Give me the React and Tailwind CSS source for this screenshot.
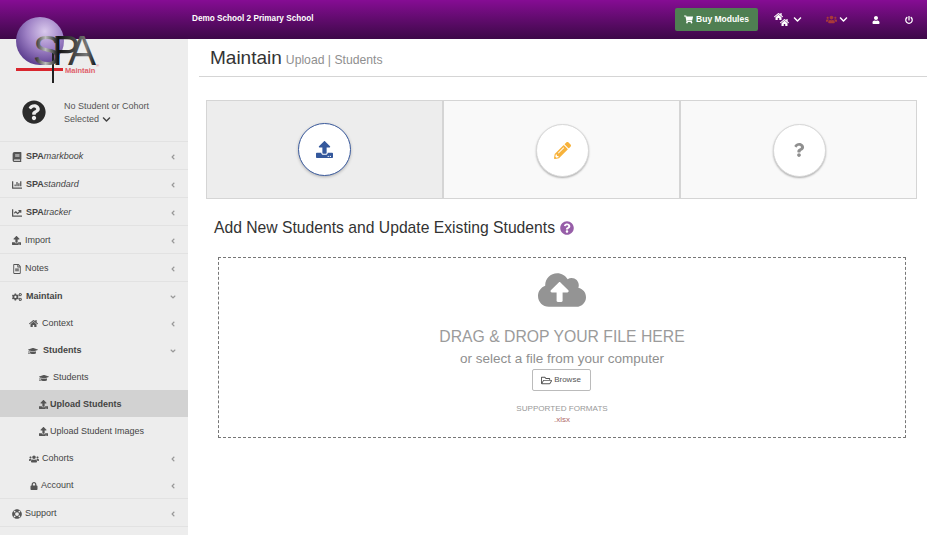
import {
  FaAngleDown, FaAngleLeft, FaBook, FaChartBar, FaChartLine, FaChevronDown, FaCloudUploadAlt,
  FaCogs, FaGraduationCap, FaHome, FaLifeRing, FaLock, FaPencilAlt, FaPowerOff, FaQuestion,
  FaQuestionCircle, FaRegFileAlt, FaRegFolderOpen, FaShoppingCart, FaUpload, FaUser, FaUsers,
} from "react-icons/fa";

const Logo = () => (
  <svg className="absolute left-[14px] top-[15px] z-10" width="92" height="72" viewBox="0 0 92 72">
    <defs>
      <radialGradient id="sphere" cx="0.6" cy="0.3" r="0.75">
        <stop offset="0" stopColor="#d9c9ec" />
        <stop offset="0.5" stopColor="#9f82c6" />
        <stop offset="1" stopColor="#56388a" />
      </radialGradient>
      <linearGradient id="letters" x1="0" y1="0" x2="1" y2="0">
        <stop offset="0" stopColor="#111" />
        <stop offset="0.2" stopColor="#bbb" />
        <stop offset="0.4" stopColor="#111" />
        <stop offset="0.65" stopColor="#444" />
        <stop offset="0.85" stopColor="#777" />
        <stop offset="1" stopColor="#111" />
      </linearGradient>
    </defs>
    <circle cx="26" cy="26" r="24" fill="url(#sphere)" />
    <rect x="2" y="53" width="47" height="3" fill="#d9262e" />
    <rect x="38" y="38" width="2" height="30" fill="#222" />
    <text x="19" y="50" fontFamily="Liberation Sans" fontSize="42" letterSpacing="-9" fill="url(#letters)">SPA</text>
    <text x="51" y="58" fontFamily="Liberation Sans" fontSize="7.5" fontWeight="700" fill="#e0606a">Maintain</text>
    <text x="82" y="52" fontFamily="Liberation Sans" fontSize="4" fill="#e0606a">®</text>
  </svg>
);

const Row = ({ icon: Icon, children, open, active, bold, indent = "pl-3", top, gap = "mr-[3px]", size = "text-[10px]" }) => (
  <div className={`${top ? "h-[28px] border-b" : "h-[27px]"} ${active ? "bg-[#d2d2d2]" : ""} ${indent} border-[#e2e2e2] flex items-center pr-[11px] pt-[2px] text-[9px] text-[#444] ${bold ? "font-bold" : ""}`}>
    <Icon className={`${size} text-[#555] shrink-0 ${gap}`} />
    <span className="flex-1 whitespace-nowrap">{children}</span>
    {open === undefined ? null : open ? (
      <FaAngleDown className="text-[8px] text-[#999]" />
    ) : (
      <FaAngleLeft className="text-[8px] text-[#999]" />
    )}
  </div>
);

const Spa = ({ name }) => (
  <>
    <span className="font-bold">SPA</span>
    <i>{name}</i>
  </>
);

const Sidebar = () => (
  <aside className="w-[188px] shrink-0 bg-[#ededed] border-[#e2e2e2]">
    <div className="h-[103px] border-b border-[#e2e2e2] flex items-end pb-[16px] pl-[22px]">
      <FaQuestionCircle className="text-[24px] text-[#2b2b2b] shrink-0 mb-[1px]" />
      <div className="ml-[18px] text-[9px] leading-[12.5px] text-[#555]">
        No Student or Cohort
        <br />
        Selected <FaChevronDown className="inline text-[9px] text-[#444]" />
      </div>
    </div>
    <Row top icon={FaBook} open={false} gap="mr-[4px]"><Spa name="markbook" /></Row>
    <Row top icon={FaChartBar} open={false} gap="mr-[4px]"><Spa name="standard" /></Row>
    <Row top icon={FaChartLine} open={false} gap="mr-[4px]"><Spa name="tracker" /></Row>
    <Row top icon={FaUpload} open={false} size="text-[9px]" gap="mr-[4px]">Import</Row>
    <Row top icon={FaRegFileAlt} open={false}>Notes</Row>
    <Row icon={FaCogs} open bold gap="mr-[4px]">Maintain</Row>
    <Row icon={FaHome} open={false} indent="pl-[29px]" size="text-[9px]" gap="mr-[4px]">Context</Row>
    <Row icon={FaGraduationCap} open indent="pl-[28px]" bold gap="mr-[5px]">Students</Row>
    <Row icon={FaGraduationCap} indent="pl-[39px]" gap="mr-[4px]">Students</Row>
    <Row icon={FaUpload} indent="pl-[39px]" active bold size="text-[9px]" gap="mr-[2px]">Upload Students</Row>
    <Row icon={FaUpload} indent="pl-[39px]" size="text-[9px]" gap="mr-[2px]">Upload Student Images</Row>
    <Row icon={FaUsers} open={false} indent="pl-[29px]">Cohorts</Row>
    <Row top icon={FaLock} open={false} indent="pl-[30px]" size="text-[8px]" gap="mr-[3px]">Account</Row>
    <Row top icon={FaLifeRing} open={false}>Support</Row>
  </aside>
);

const Header = () => (
  <header className="h-[39px] shrink-0 bg-gradient-to-b from-[#860c94] to-[#3d0848] flex items-center text-white text-[8.2px] font-bold">
    <div className="ml-[192px] flex-1">Demo School 2 Primary School</div>
    <div className="flex items-center justify-center w-[83px] h-[23px] rounded-[2px] bg-[#4f7f52] text-[8.5px] mr-[16px]">
      <FaShoppingCart className="text-[9px] mr-[3px]" /> Buy Modules
    </div>
    <div className="flex items-center mr-[24px]">
      <div className="relative w-[15px] h-[15px] mr-[4px]">
        <FaHome className="absolute left-0 top-0 text-[9px]" />
        <FaHome className="absolute right-0 bottom-0 text-[9px]" />
      </div>
      <FaChevronDown className="text-[9px]" />
    </div>
    <div className="flex items-center mr-[24px]">
      <FaUsers className="text-[11px] text-[#a83a3a] mr-[2px]" />
      <FaChevronDown className="text-[9px]" />
    </div>
    <FaUser className="text-[8px] mr-[25px]" />
    <FaPowerOff className="text-[8px] mr-[14px]" />
  </header>
);

const Step = ({ icon: Icon, active, color, size = "text-[17px]" }) => (
  <div className={`flex-1 flex items-center justify-center ${active ? "bg-[#ededed]" : "bg-[#f9f9f9]"}`}>
    <div className={`w-[53px] h-[53px] rounded-full bg-white flex items-center justify-center ${active ? "border border-[#3b5b9d] shadow-[0_1px_3px_rgba(0,0,0,0.25)]" : "mt-[1px] ml-[1px] border border-[#d8d8d8] shadow-[0_1px_2px_rgba(0,0,0,0.3)]"}`}>
      <Icon className={`${size} ${color}`} />
    </div>
  </div>
);

const Main = () => (
  <main className="flex-1 min-w-0 bg-white">
    <div className="ml-[11px] h-[38px] border-b border-[#d5d5d5] pl-[11px] flex items-center pt-[2px]">
      <span className="text-[19px] text-[#333]">Maintain</span>
      <span className="ml-[4px] mt-[3px] text-[12.2px] text-[#8f8f8f]">Upload | Students</span>
    </div>
    <div className="ml-[18px] mr-[10px] mt-[23px] h-[99px] flex gap-[2px] bg-[#d5d5d5] border border-[#d5d5d5]">
      <Step icon={FaUpload} active color="text-[#34589c]" />
      <Step icon={FaPencilAlt} color="text-[#f7b23b]" />
      <Step icon={FaQuestion} color="text-[#8f8f8f]" size="text-[14px]" />
    </div>
    <h2 className="ml-[26px] mt-[19px] flex items-center text-[15.7px] leading-[20px] text-[#333]">
      Add New Students and Update Existing Students
      <FaQuestionCircle className="ml-[5px] text-[14px] text-[#975ea8]" />
    </h2>
    <div className="ml-[30px] mr-[21px] mt-[19px] h-[181px] border border-dashed border-[#777] flex flex-col items-center text-[#8f8f8f]">
      <FaCloudUploadAlt className="text-[48px] text-[#949494] mt-[8px]" />
      <div className="text-[15.75px] leading-[20px] mt-[13px] text-[#9b9b9b]">DRAG &amp; DROP YOUR FILE HERE</div>
      <div className="text-[13.5px] leading-[18px] mt-[3px]">or select a file from your computer</div>
      <button className="mt-[1px] mr-[2px] h-[22px] w-[59px] border border-[#bbb] rounded-[2px] flex items-center justify-center text-[8px] text-[#555]">
        <FaRegFolderOpen className="text-[11px] mr-[2px]" /> Browse
      </button>
      <div className="mt-[12px] text-[8.1px] leading-[11px] text-[#999]">SUPPORTED FORMATS</div>
      <div className="text-[8px] leading-[11px] text-[#b06a6a]">.xlsx</div>
    </div>
  </main>
);

export default function App() {
  return (
    <div className="relative h-screen overflow-hidden flex flex-col font-['Liberation_Sans',Arial,sans-serif]">
      <Logo />
      <Header />
      <div className="flex flex-1 min-h-0">
        <Sidebar />
        <Main />
      </div>
    </div>
  );
}
